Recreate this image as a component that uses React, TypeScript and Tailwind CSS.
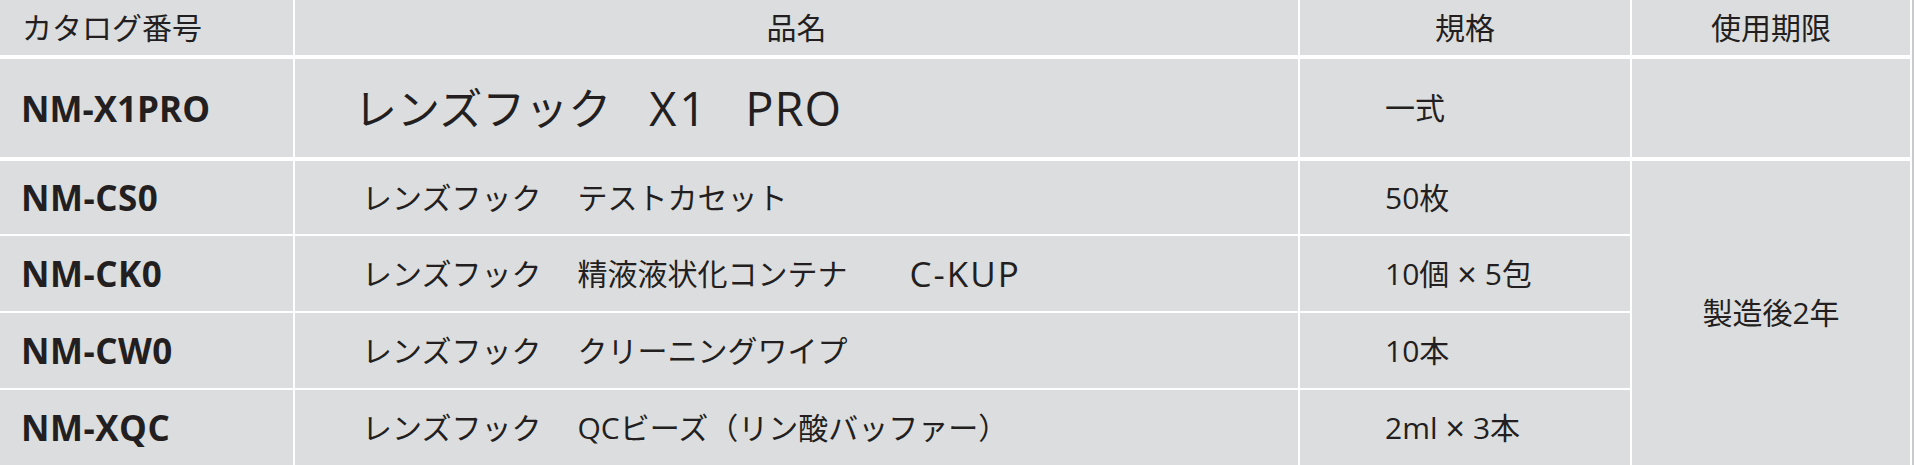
const cols = "grid grid-cols-[293px_1003px_330px_278px] gap-x-[2px]";

type Part = { text: string; latin?: boolean };

const rows: { code: string; name: Part[]; spec: string[] }[] = [
  { code: "NM-CS0", name: [{ text: "レンズフック" }, { text: "テストカセット" }], spec: ["50枚"] },
  {
    code: "NM-CK0",
    name: [{ text: "レンズフック" }, { text: "精液液状化コンテナ" }, { text: "C-KUP", latin: true }],
    spec: ["10個", "5包"],
  },
  { code: "NM-CW0", name: [{ text: "レンズフック" }, { text: "クリーニングワイプ" }], spec: ["10本"] },
  {
    code: "NM-XQC",
    name: [{ text: "レンズフック" }, { text: "QCビーズ（リン酸バッファー）" }],
    spec: ["2ml", "3本"],
  },
];

const Spec = ({ parts }: { parts: string[] }) => (
  <>
    {parts.map((p, i) => (
      <span key={p} className="flex items-center">
        {i > 0 && <span className="mx-[8px] text-[34px]">×</span>}
        {p}
      </span>
    ))}
  </>
);

const App = () => {
  return (
    <div
      className="w-[1914px] h-[465px] overflow-hidden bg-[#c9cacc] text-[#231f20]"
      style={{ fontFamily: '"Open Sans", "Noto Sans CJK JP", sans-serif' }}
    >
      <div className="w-[1912px] h-full bg-white flex flex-col">
        {/* Header */}
        <div className={`${cols} h-[55px] text-[30px] leading-none`}>
          <div className="bg-[#dcdddf] flex items-center pl-[22px]">カタログ番号</div>
          <div className="bg-[#dcdddf] flex items-center justify-center">品名</div>
          <div className="bg-[#dcdddf] flex items-center justify-center">規格</div>
          <div className="bg-[#dcdddf] flex items-center justify-center">使用期限</div>
        </div>

        {/* Main product */}
        <div className={`${cols} h-[98px] mt-[4px] leading-none`}>
          <div className="bg-[#dcdddf] flex items-center pl-[21px] text-[35px] font-bold">NM-X1PRO</div>
          <div className="bg-[#dcdddf] flex items-center pl-[59px] text-[43px]">
            <span>レンズフック</span>
            <span className="ml-[38px] text-[47px] tracking-[3px]">X1</span>
            <span className="ml-[36px] text-[47px] tracking-[1px]">PRO</span>
          </div>
          <div className="bg-[#dcdddf] flex items-center pl-[85px] text-[30px]">一式</div>
          <div className="bg-[#dcdddf]"></div>
        </div>

        {/* Accessories */}
        <div className={`${cols} grid-rows-[73px_75px_75px_75px] gap-y-[2px] mt-[4px] leading-none`}>
          {rows.map((r, i) => (
            <div key={r.code} className="contents">
              <div
                className="bg-[#dcdddf] flex items-center pl-[21px] text-[35px] font-bold tracking-[0.5px] col-start-1"
                style={{ gridRow: i + 1 }}
              >
                {r.code}
              </div>
              <div
                className="bg-[#dcdddf] flex items-center gap-[36px] pl-[67px] text-[30px] whitespace-pre col-start-2"
                style={{ gridRow: i + 1 }}
              >
                {r.name.map((part) => (
                  <span key={part.text} className={part.latin ? "ml-[26px] text-[35px] tracking-[2px]" : ""}>
                    {part.text}
                  </span>
                ))}
              </div>
              <div
                className="bg-[#dcdddf] flex items-center pl-[85px] text-[30px] whitespace-pre col-start-3"
                style={{ gridRow: i + 1 }}
              >
                <Spec parts={r.spec} />
              </div>
            </div>
          ))}
          <div className="bg-[#dcdddf] col-start-4 row-start-1 row-span-4 flex items-center justify-center text-[30px]">
            製造後2年
          </div>
        </div>
      </div>
    </div>
  );
};

export default App;
